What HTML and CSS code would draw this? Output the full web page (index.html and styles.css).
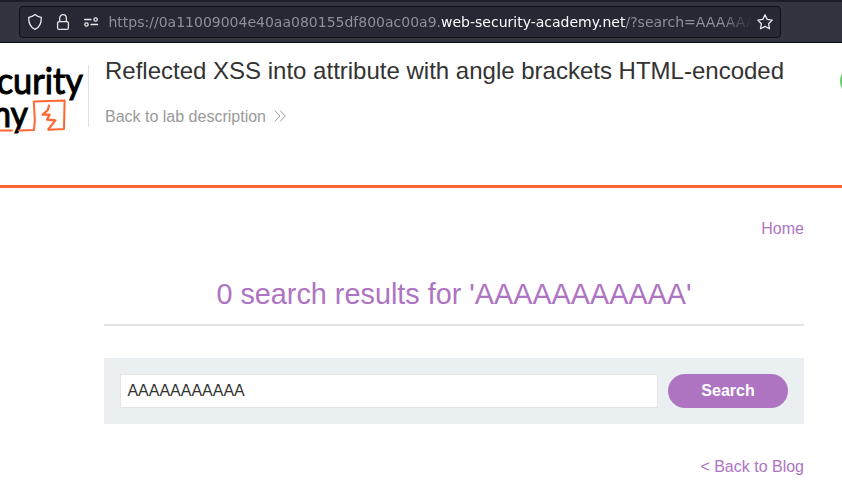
FILE: index.html
```
<!DOCTYPE html>
<html lang="en">
<head>
<meta charset="utf-8">
<title>Reflected XSS into attribute with angle brackets HTML-encoded</title>
<link rel="stylesheet" href="styles.css">
</head>
<body>
<div class="toolbar">
  <div class="urlbar">
    <svg class="icons" width="88" height="30" viewBox="20 7 88 30" fill="none" stroke="#e6e7ea" stroke-width="1.3" stroke-linecap="round" stroke-linejoin="round">
      <path d="M35 14.6C33 16.3 31 17 28.7 17.3C28.5 22.7 30 27.2 35 29.4C40 27.2 41.5 22.7 41.3 17.3C39 17 37 16.3 35 14.6Z"/>
      <rect x="57.6" y="21.6" width="10.8" height="7.8" rx="1.5"/>
      <path d="M59.7 21.5V18a3.3 3.3 0 0 1 6.6 0v3.5"/>
      <path d="M84.6 19.5H91M91 24.5H97.5"/>
      <circle cx="95.6" cy="19.5" r="1.7"/><circle cx="86.5" cy="24.5" r="1.7"/>
    </svg>
    <div class="url">https://0a11009004e40aa080155df800ac00a9.<b>web-security-academy.net</b>/?search=AAAAAAAAAAA</div>
    <svg class="star" width="18" height="18" viewBox="0 0 18 18" fill="none" stroke="#e6e7ea" stroke-width="1.3" stroke-linejoin="round"><path d="M9 1.8L11.2 6.4L16.2 7.1L12.6 10.7L13.5 15.8L9 13.4L4.5 15.8L5.4 10.7L1.8 7.1L6.8 6.4Z"/></svg>
  </div>
</div>
<header class="lab">
  <svg class="logo" width="88" height="85" viewBox="0 53 88 85">
    <g class="logo-text">
      <text x="-40" y="93.5" textLength="123" lengthAdjust="spacingAndGlyphs">Security</text>
      <text x="-109" y="126.5" textLength="137" lengthAdjust="spacingAndGlyphs">Academy</text>
    </g>
    <g fill="none" stroke="#ff6633" stroke-linejoin="round" stroke-linecap="round">
      <path stroke-width="2" d="M0 130.6L12 130.5M19 130.4L34 130L34.8 120L33.8 101.5L64.6 100.4L64 129L48.5 129.8"/>
      <path stroke-width="2.2" d="M49 105.5L47.8 110L42.5 114.7L49.6 114.6L47 119.7L55.4 120.4L48.4 129.2"/>
    </g>
  </svg>
  <div class="lab-info">
    <h2>Reflected XSS into attribute with angle brackets HTML-encoded</h2>
    <a class="lab-link">Back to lab description
      <svg width="12" height="14" viewBox="0 0 12 14" fill="none" stroke="#999" stroke-width="1"><path d="M.7 .5L6 6L.7 11.5M6 .5L11.3 6L6 11.5"/></svg>
    </a>
  </div>
  <span class="status"></span>
</header>
<main>
  <nav>Home</nav>
  <h1>0 search results for 'AAAAAAAAAAA'</h1>
  <form class="search">
    <input type="text" value="AAAAAAAAAAA">
    <button type="button">Search</button>
  </form>
  <a class="back">&lt; Back to Blog</a>
</main>
</body>
</html>
```
FILE: styles.css
```
* { box-sizing: border-box; }
body {
  margin: 0;
  height: 489px;
  overflow: hidden;
  background: #fff;
  color: #333332;
  font: 16px/20px "Liberation Sans", Arial, sans-serif;
}
.toolbar {
  height: 43px;
  padding: 4px 0 0 19px;
  background: #33353e;
  border-top: 2px solid #1c1e26;
  border-bottom: 1px solid #0c0c13;
}
.urlbar {
  display: flex;
  align-items: center;
  width: 762px;
  height: 32px;
  background: #272833;
  border: 1px solid #0d0e14;
  border-radius: 4px;
}
.icons { flex: none; }
.url {
  flex: none;
  width: 644px;
  padding-left: .5px;
  overflow: hidden;
  white-space: nowrap;
  color: #8f9096;
  font: 14px/20px "DejaVu Sans", sans-serif;
  -webkit-mask-image: linear-gradient(to left, transparent, #000 30px);
  mask-image: linear-gradient(to left, transparent, #000 30px);
}
.url b { font-weight: 400; color: #fbfbfe; }
.star { flex: none; margin-left: 4px; }
.lab {
  position: relative;
  display: flex;
  height: 145px;
  padding-top: 10px;
  border-bottom: 3px solid #ff6633;
}
.logo { flex: none; }
.logo-text { font: 400 37px Lato, sans-serif; fill: #000; stroke: #000; stroke-width: 1.1px; }
.lab-info {
  height: 62px;
  margin-top: 12px;
  padding-left: 16px;
  border-left: 1px solid #e2e2e2;
}
.lab h2 {
  margin: -8px 0 0;
  font-size: 24px;
  line-height: 28px;
  font-weight: 400;
  white-space: nowrap;
}
.lab-link {
  display: flex;
  align-items: center;
  gap: 8px;
  margin-top: 22px;
  color: #999;
}
.status {
  position: absolute;
  left: 840px;
  top: 22px;
  width: 32px;
  height: 32px;
  border-radius: 50%;
  background: #5fcf62;
}
main { width: 700px; margin-left: 104px; padding-top: 31px; }
nav { text-align: right; color: #ae74c2; }
h1 {
  height: 56px;
  margin: 31px 0 32px;
  padding-top: 7px;
  border-bottom: 2px solid #e3e3e3;
  color: #ae74c2;
  text-align: center;
  font-size: 28.8px;
  line-height: 34px;
  font-weight: 400;
}
.search {
  display: flex;
  gap: 10px;
  height: 66px;
  padding: 16px;
  background: #eaeff2;
}
.search input {
  flex: 1;
  min-width: 0;
  padding: 0 6.4px;
  border: 1px solid #e4e4e4;
  color: #333332;
  font: inherit;
}
.search button {
  width: 120px;
  padding: 0;
  border: 0;
  border-radius: 17px;
  background: #ae74c2;
  color: #fff;
  font: bold 16px "Liberation Sans", Arial, sans-serif;
}
.back { display: block; margin-top: 33px; text-align: right; color: #ae74c2; }
```
